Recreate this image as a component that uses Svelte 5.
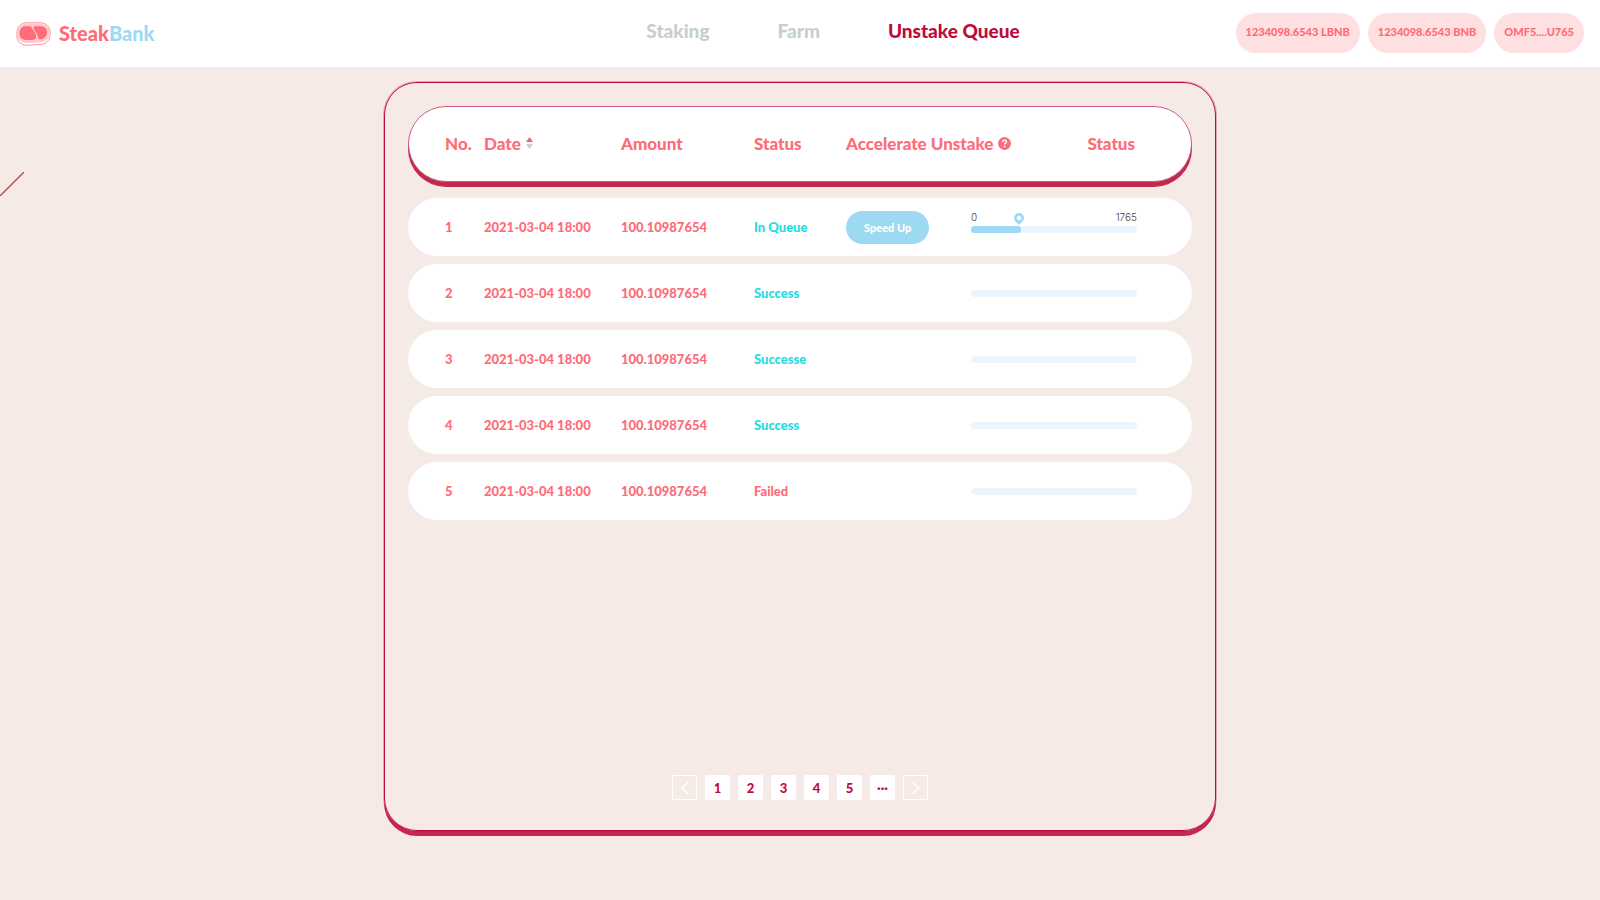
<script lang="ts">
  type Unstake = {
    no: number;
    date: string;
    amount: string;
    status: string;
    queue?: { position: number; total: number };
  };

  const navItems = [
    { label: 'Staking', href: '#staking' },
    { label: 'Farm', href: '#farm' },
    { label: 'Unstake Queue', href: '#unstake-queue' },
  ];

  const wallet = ['1234098.6543 LBNB', '1234098.6543 BNB', 'OMF5....U765'];

  const rows: Unstake[] = [
    { no: 1, date: '2021-03-04 18:00', amount: '100.10987654', status: 'In Queue', queue: { position: 530, total: 1765 } },
    { no: 2, date: '2021-03-04 18:00', amount: '100.10987654', status: 'Success' },
    { no: 3, date: '2021-03-04 18:00', amount: '100.10987654', status: 'Successe' },
    { no: 4, date: '2021-03-04 18:00', amount: '100.10987654', status: 'Success' },
    { no: 5, date: '2021-03-04 18:00', amount: '100.10987654', status: 'Failed' },
  ];

  const pages = ['1', '2', '3', '4', '5', '···'];

  let active = $state('Unstake Queue');

  function percent(queue: { position: number; total: number }) {
    return Math.round((queue.position / queue.total) * 100);
  }
</script>

<div class="page">
  <header class="topbar">
    <a class="logo" href="#home">
      <svg width="35" height="24" viewBox="0 0 35 24" aria-hidden="true">
        <path d="M11 .8h13c6.500 0 10.200 4 10.200 10.400 0 7.500-4.200 11-10 11.300-5 .2-8.500.8-13 .7C4.500 23 .8 19.500.8 12.500.8 5 4.500.8 11 .8z" fill="#fff" stroke="#ff8f97" />
        <path d="M11 1.500h13c6 0 9.500 3.500 9.500 8.500 0 7-4 9.800-9.500 10.300-5 .5-9 .8-13 .6C5 20.600 1.500 17.500 1.500 12 1.500 5.500 5 1.500 11 1.500z" fill="#ffc9d0" />
        <path d="M9.500 4.200h5c1 .2 1 1.200 1.600 2.300 1 2 2.400 2.800 3.300 5 .8 2 1 4.500-.4 5.800-1.500 1-4 .7-7.500.7-5 0-8-2-8-6.500 0-4.600 2.400-7.300 6-7.300z" fill="#ff6b78" />
        <path d="M18.500 4.200h6c4.200 0 6.700 2.400 6.500 6.200-.2 4.300-3.200 6.800-8.300 6.900-.8-3-1.400-5-2.800-7-1.400-2-3.600-5.300-1.400-6.100z" fill="#ff6b78" />
      </svg>
      <span class="logo-text">Steak<span class="logo-bank">Bank</span></span>
    </a>

    <nav class="nav" aria-label="Main">
      {#each navItems as item}
        <a href={item.href} class:active={active === item.label} onclick={() => (active = item.label)}>{item.label}</a>
      {/each}
    </nav>

    <div class="wallet">
      {#each wallet as entry}
        <button type="button">{entry}</button>
      {/each}
    </div>
  </header>

  <svg class="streak" width="24" height="24" viewBox="0 0 24 24" aria-hidden="true">
    <path d="M0 24L24 0" stroke="#b0533f" stroke-width="1.400" fill="none" />
  </svg>

  <main class="panel">
    <table>
      <thead>
        <tr>
          <th>No.</th>
          <th>
            <button class="sort" type="button">
              Date
              <svg width="7" height="12" viewBox="0 0 7 12" aria-hidden="true">
                <path d="M3.500 0L7 5H0z" fill="#ff5f6d" />
                <path d="M0 7h7l-3.500 5z" fill="#c5cfd1" />
              </svg>
            </button>
          </th>
          <th>Amount</th>
          <th>Status</th>
          <th>
            <span class="with-icon">
              Accelerate Unstake
              <svg width="13" height="13" viewBox="0 0 13 13" aria-hidden="true">
                <circle cx="6.500" cy="6.500" r="6.500" fill="#ff6b78" />
                <path d="M4.600 5c0-1.200.8-1.900 1.900-1.900s1.900.7 1.900 1.700c0 1.300-1.800 1.300-1.800 2.700" fill="none" stroke="#fff" stroke-width="1.400" />
                <circle cx="6.600" cy="9.500" r=".9" fill="#fff" />
              </svg>
            </span>
          </th>
          <th>Status</th>
        </tr>
      </thead>
      <tbody>
        {#each rows as row}
          <tr>
            <td>{row.no}</td>
            <td>{row.date}</td>
            <td>{row.amount}</td>
            <td class:good={row.status !== 'Failed'}>{row.status}</td>
            <td>
              {#if row.queue}
                <button class="speed-up" type="button">Speed Up</button>
              {/if}
            </td>
            <td class:queued={row.queue}>
              <div class="track">
                {#if row.queue}
                  <div class="scale"><span>0</span><span>{row.queue.total}</span></div>
                  <div class="fill" style="width: {percent(row.queue)}%">
                    <svg class="pin" width="10" height="12" viewBox="0 0 10 12" aria-hidden="true">
                      <path d="M5 0a5 5 0 0 1 5 5c0 2.600-2 4-5 7C2 9 0 7.600 0 5a5 5 0 0 1 5-5z" fill="#9dd9f2" />
                      <circle cx="5" cy="5" r="2.200" fill="#fff" />
                    </svg>
                  </div>
                {/if}
              </div>
            </td>
          </tr>
        {/each}
      </tbody>
    </table>

    <nav class="pagination" aria-label="Pagination">
      <button class="arrow" type="button" aria-label="Previous page">
        <svg width="8" height="12" viewBox="0 0 8 12" aria-hidden="true"><path d="M7 .5L1 6l6 5.500" /></svg>
      </button>
      {#each pages as page}
        <button type="button">{page}</button>
      {/each}
      <button class="arrow" type="button" aria-label="Next page">
        <svg width="8" height="12" viewBox="0 0 8 12" aria-hidden="true"><path d="M1 .5L7 6l-6 5.500" /></svg>
      </button>
    </nav>
  </main>
</div>

<style>
  :global(body) {
    background: #f5eae5;
  }

  .page {
    position: relative;
    display: flex;
    flex-direction: column;
    box-sizing: border-box;
    min-height: 100vh;
    padding-bottom: 69px;
    font-family: Lato, sans-serif;
    font-weight: 900;
    color: #ff6b78;
  }

  button {
    padding: 0;
    border: none;
    background: none;
    font: inherit;
    color: inherit;
    cursor: pointer;
  }

  a {
    color: inherit;
    text-decoration: none;
  }

  .topbar {
    display: grid;
    grid-template-columns: 1fr auto 1fr;
    align-items: center;
    box-sizing: border-box;
    min-height: 67px;
    padding: 0 16px;
    background: #fff;
  }

  .logo {
    display: flex;
    align-items: center;
    gap: 8px;
    font-size: 20px;
  }

  .logo-text {
    padding-bottom: 2px;
  }

  .logo-bank {
    color: #9dd9f2;
  }

  .nav {
    display: flex;
    gap: 68px;
    padding: 0 0 6px 66px;
    font-size: 19px;
    color: #c5cfd1;
  }

  .nav .active {
    color: #bf0a3e;
  }

  .wallet {
    display: flex;
    justify-content: flex-end;
    gap: 8px;
    padding-bottom: 2px;
  }

  .wallet button {
    height: 40px;
    padding: 0 10px 2px;
    border-radius: 20px;
    background: #ffe0e2;
    font-size: 11px;
    white-space: nowrap;
  }

  .streak {
    position: absolute;
    top: 172px;
    left: 0;
  }

  .panel {
    display: flex;
    flex: 1;
    flex-direction: column;
    justify-content: space-between;
    box-sizing: border-box;
    width: 100%;
    max-width: 832px;
    margin: 15px auto 0;
    padding: 23px 23px 30px;
    border: 1px solid #bf0a3e;
    border-radius: 33px;
    box-shadow: 0 0 0 1px rgb(191 10 62 / 30%), 0 5px 0 #c4274f;
  }

  table,
  thead,
  tbody {
    display: flex;
    flex-direction: column;
  }

  table {
    gap: 16px;
  }

  tbody {
    gap: 8px;
  }

  tr {
    display: grid;
    grid-template-columns: 39px 137px 133px 92px 1fr auto;
    align-items: center;
    box-sizing: border-box;
    min-height: 58px;
    padding: 0 55px 0 37px;
    border-radius: 29px;
    background: #fff;
  }

  thead tr {
    min-height: 76px;
    border: 1px solid #cf5c7a;
    border-radius: 38px;
    padding: 0 56px 2px 36px;
    box-shadow: 0 5px 0 #c4274f;
  }

  th,
  td {
    padding: 0;
    text-align: left;
    white-space: nowrap;
  }

  th {
    font-size: 17px;
    font-weight: 900;
  }

  td {
    font-size: 13px;
  }

  .good {
    color: #25dbe2;
  }

  .queued {
    padding-top: 5px;
  }

  .sort,
  .with-icon {
    display: flex;
    align-items: center;
    gap: 5px;
  }

  .speed-up {
    height: 33px;
    padding: 0 18px;
    border-radius: 17px;
    background: #9dd9f2;
    font-size: 11px;
    color: #fff;
  }

  .track {
    position: relative;
    width: 166px;
    height: 7px;
    border-radius: 4px;
    background: #eaf6fc;
  }

  .scale {
    position: absolute;
    right: 0;
    bottom: 9px;
    left: 0;
    display: flex;
    justify-content: space-between;
    font: 300 10px/14px Inter, sans-serif;
    color: #4a4442;
  }

  .fill {
    position: relative;
    height: 7px;
    border-radius: 4px;
    background: #9dd9f2;
  }

  .pin {
    position: absolute;
    right: -3px;
    bottom: 8px;
  }

  .pagination {
    display: flex;
    justify-content: center;
    gap: 8px;
  }

  .pagination button {
    display: grid;
    place-items: center;
    width: 25px;
    height: 25px;
    border: 1px solid #fff;
    border-radius: 1px;
    background: #fff;
    font-size: 13px;
    color: #bf0a3e;
  }

  .pagination .arrow {
    background: none;
  }

  .arrow path {
    fill: none;
    stroke: #fff;
    stroke-width: 1.4;
  }
</style>
